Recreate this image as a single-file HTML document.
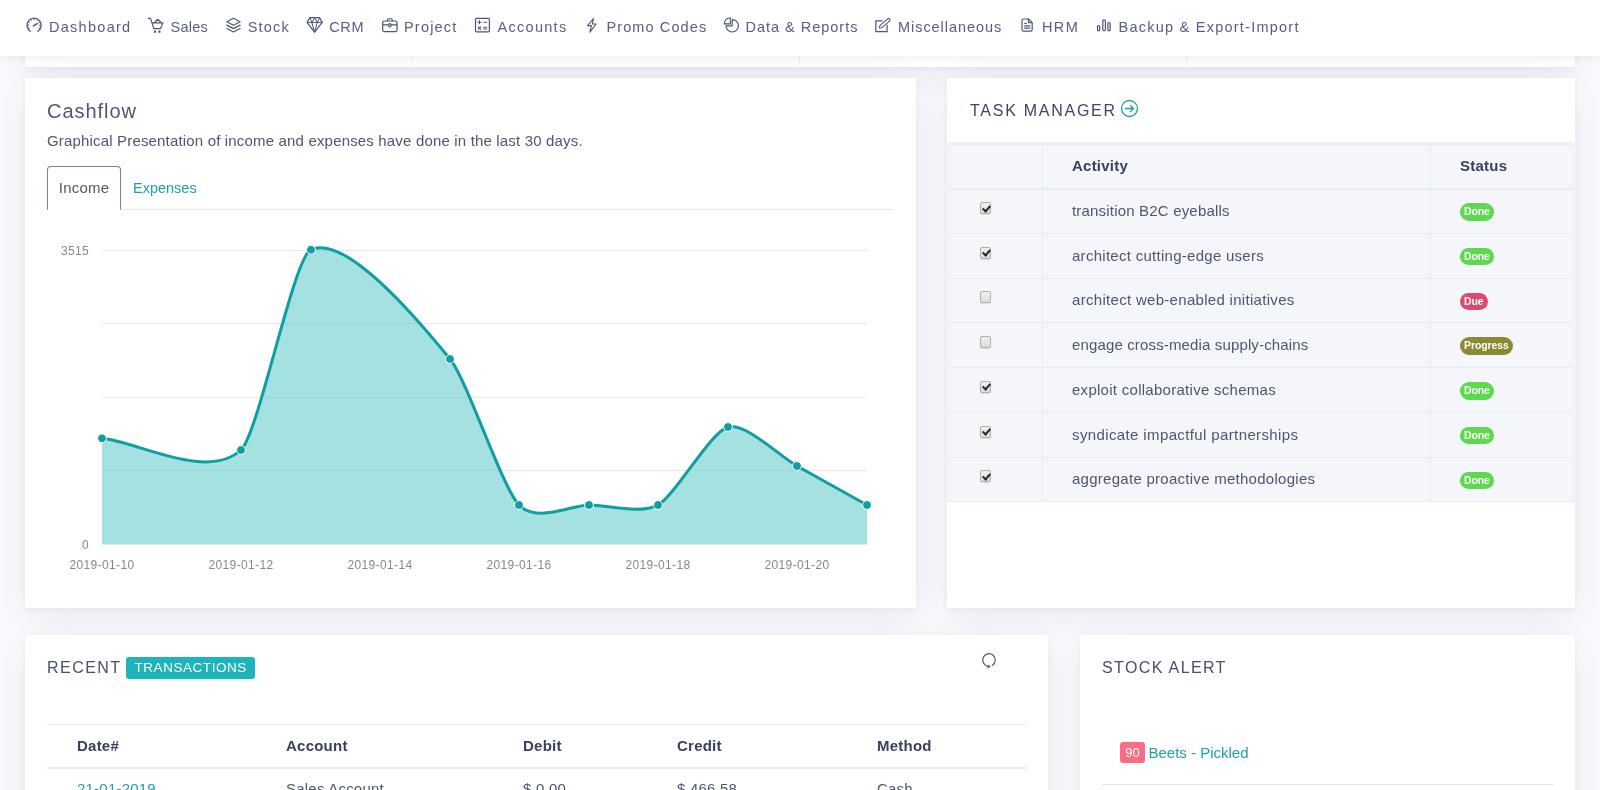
<!DOCTYPE html>
<html lang="en">
<head>
<meta charset="utf-8">
<title>Dashboard</title>
<style>
*{box-sizing:border-box;margin:0;padding:0}
html,body{width:1600px;height:790px;overflow:hidden}
body{background:#f9fafd;font-family:"Liberation Sans",sans-serif;font-size:15px;color:#4e5670;position:relative}
a{text-decoration:none;color:#1e9fa6}
.wrap{position:absolute;left:0;top:0;width:1600px;height:790px;overflow:hidden;will-change:transform}
.nav{position:absolute;left:0;top:0;width:1600px;height:56px;background:#fff;box-shadow:0 1px 10px 0 rgba(50,50,70,.08);z-index:5}
.nicons{position:absolute;left:0;top:0;fill:none;stroke:#4b5675;stroke-linecap:round;stroke-linejoin:round}
.nl{position:absolute;top:17px;font-size:14.5px;line-height:20px;color:#566080;white-space:nowrap}
.card{position:absolute;background:#fff;box-shadow:0 10px 40px 0 rgba(62,57,107,.07),0 2px 9px 0 rgba(62,57,107,.06)}
.mont{font-family:"Liberation Sans",sans-serif}
.prev{left:25px;top:0;width:1550px;height:67px}
.prev i{position:absolute;top:0;width:1px;height:67px;background:#f1f1f4}
/* cashflow */
.cash{left:25px;top:78px;width:891px;height:530px}
.cash h4{position:absolute;left:22px;top:21px;font-size:20px;font-weight:400;letter-spacing:.95px;line-height:24px;color:#4d5775}
.cash p{position:absolute;left:22px;top:52px;font-size:15px;letter-spacing:.17px;line-height:22px;color:#4e5670;white-space:nowrap}
.tabs{position:absolute;left:22px;top:88px;width:846px;height:44px;border-bottom:1px solid #e4e6ea}
.tab1{position:absolute;left:0;top:0;width:74px;height:44px;border:1px solid #7a8299;border-bottom:1px solid #fff;border-radius:4px 4px 0 0;background:#fff;text-align:center;line-height:42px;color:#55595c;letter-spacing:.2px}
.tab2{position:absolute;left:86px;top:0;line-height:44px;color:#1e9fa6;letter-spacing:0;font-size:14.5px}
.chart{position:absolute;left:0;top:0;width:891px;height:529px}
.chart text{font-family:"Liberation Sans",sans-serif;font-size:12px;fill:#888;letter-spacing:.35px}
/* tasks */
.task{left:947px;top:78px;width:628px;height:530px}
.ttl{position:absolute;font-size:16px;letter-spacing:1.6px;line-height:20px;color:#464f6b;white-space:nowrap;text-transform:uppercase}
table{border-collapse:collapse}
.tt{position:absolute;left:1px;top:66px;width:626px;background:#f4f6fa}
.tt td,.tt th{border:1px solid #e3ebf3;height:44.75px;padding:0;vertical-align:middle;text-align:left;white-space:nowrap}
.tt th{height:44px;padding-bottom:2px;font-weight:700;color:#384160;letter-spacing:.23px;border-bottom-width:2px}
.tt td{letter-spacing:.24px;color:#4e5670}.tt td.c2{padding-bottom:1px}.tstrip{position:absolute;left:1px;top:63.500px;width:626px;height:3px;background:#edf1f7}
.tt .c1{width:94px;text-align:center}
.tt .c2{width:388px;padding-left:29px}
.tt .c3{padding-left:29px}
.bdg{display:inline-block;font-size:10.5px;font-weight:700;color:#fff;border-radius:10px;height:17.5px;line-height:17.5px;padding:0 4px;letter-spacing:-.1px;position:relative;top:0}
.g{background:#5ed84f}.r{background:#e0486e}.o{background:#8a8a35}
.cb{display:inline-block;width:11px;height:12px;border:1px solid #b0b0b0;border-radius:2px;position:relative;top:-2.5px;left:-10.500px;background:linear-gradient(#efefef,#dcdcdc);box-shadow:0 1px 1px rgba(0,0,0,.1)}
.cb.on:after{content:"";position:absolute;left:3px;top:.5px;width:3px;height:6px;border:solid #2b2b2b;border-width:0 2px 2px 0;transform:rotate(42deg)}
/* recent */
.rec{left:25px;top:634.5px;width:1023px;height:200px}
.tbadge{position:absolute;left:101px;top:22.500px;height:22px;padding:0 8.500px;background:#1eb4bb;border-radius:3px;color:#fff;font-size:13.5px;letter-spacing:.55px;line-height:22px}
.rt{position:absolute;left:22px;top:89px;width:979px}
.rt th{height:44px;border-top:1px solid #e3ebf3;border-bottom:2px solid #e3ebf3;text-align:left;font-weight:700;color:#384160;letter-spacing:.23px;padding-bottom:1px}
.rt td{height:40px;text-align:left;color:#4e5670;letter-spacing:.22px}
/* stock */
.stk{left:1080px;top:634.5px;width:495px;height:200px}
.sb{position:absolute;left:40px;top:107px;height:21px;width:25px;background:#ff6b81;border-radius:3px;color:#fff;font-size:13px;text-align:center;line-height:21px}
.sn{position:absolute;left:68.500px;top:107px;line-height:22px;font-size:15px;letter-spacing:0;color:#1e9fa6;white-space:nowrap}
.sl{position:absolute;left:22px;top:149px;width:451px;height:1px;background:#e4e6ea}
</style>
</head>
<body>
<div class="wrap">
<div class="nav" id="nav">
<svg class="nicons" width="1600" height="56" viewBox="0 0 1600 56">
<g stroke-width="1.2">
<path d="M30.36 31.33A7.1 7.1 0 1 1 37.84 31.33"/>
<path d="M33.4 25.9L37.3 23.7" stroke-width="1.5"/>
<path stroke-width="1" d="M34.1 18.6v1.3M27.4 25.3h1.3M40.8 25.3h-1.3M28.3 21.9l1.1.65M39.9 21.9l-1.1.65M30.7 19.5l.65 1.1M37.500 19.5l-.65 1.1M28.200 28.500l1.100-.6M40 28.500l-1.100-.6"/>
<path d="M148.3 18.4h2.2l3.300 10.150h6.800l2.300-5.700h-10.600"/>
<path d="M154.800 22.500l2.700-3.200 3.100 2.500" stroke-width="1.200"/>
<circle cx="155" cy="31.650" r=".6"/><circle cx="159.450" cy="31.650" r=".6"/>
<path d="M233.450 18.300l6.600 3.500-6.600 3.500-6.600-3.500z"/><path d="M226.850 25.100l6.600 3.500 6.600-3.500"/><path d="M226.850 28.500l6.600 3.500 6.600-3.500"/>
<path d="M309.900 17.700h9.600l2.700 4.700-7.600 9.800-7.600-9.800z"/>
<path stroke-width="1" d="M307.400 22.400h15M309.900 17.700l1.900 4.700 2.800-4.700 2.700 4.700 2.400-4.700M311.800 22.400l2.800 9.800 2.700-9.800"/>
<rect x="382.700" y="21" width="14.300" height="10.600" rx="1.500"/>
<path d="M387.600 21v-1.400q0-.8.800-.8h3q.8 0 .8.800v1.400" stroke-width="1.1"/>
<path d="M382.700 24.900h5.700M391.200 24.900h5.800" stroke-width="1.100"/>
<ellipse cx="389.800" cy="25.300" rx="1.200" ry="1.700" stroke-width="1.200"/>
<rect x="475.500" y="18.400" width="13.900" height="13.400" rx="1"/>
<path stroke-width="1.1" d="M477.900 22.200h3.200M479.500 20.600v3.200M483.700 22.200h3M478.300 26.900l2.400 2.400M480.700 26.900l-2.400 2.400M483.700 27.300h3M483.700 29h3"/>
<path stroke-width="1.1" d="M593.500 18.500L587.500 25.600h3.900L589.900 32.200l6.200-8.200h-3.900z"/>
<path d="M732.200 19.600A6.200 6.200 0 1 1 726 25.800H732.200z"/>
<path d="M730.300 23.900H724.200A6.100 6.100 0 0 1 730.300 17.800z" stroke-width="1.1"/>
<path d="M887.100 25.200v6.400h-11.300v-10.800h6.300"/>
<path stroke-width="1.1" d="M879.400 28l.5-2.300 8-7q.8-.6 1.500.1l.4.500q.6.800-.1 1.500l-8 7z"/>
<path d="M1023.700 19h4.800l3.700 3.700v6.800q0 1.700-1.700 1.700h-6.800q-1.700 0-1.700-1.700v-8.800q0-1.700 1.700-1.700z"/>
<path stroke-width="1.200" d="M1028.400 19.300v3.300h3.500M1024.600 23.500h1.800M1024.600 25.900h5.200M1024.600 28.200h5.200"/>
<rect x="1097.500" y="25.500" width="2.200" height="5.300" rx="1"/><rect x="1102.800" y="19.900" width="2.600" height="10.900" rx="1.200"/><rect x="1107.900" y="22.600" width="2.200" height="8.200" rx="1"/>
</g>
</svg>
<span class="nl" style="left:49.00px;letter-spacing:1.275px">Dashboard</span>
<span class="nl" style="left:170.50px;letter-spacing:0.250px">Sales</span>
<span class="nl" style="left:247.75px;letter-spacing:1.200px">Stock</span>
<span class="nl" style="left:329.25px;letter-spacing:0.600px">CRM</span>
<span class="nl" style="left:404.00px;letter-spacing:1.200px">Project</span>
<span class="nl" style="left:497.50px;letter-spacing:1.286px">Accounts</span>
<span class="nl" style="left:606.50px;letter-spacing:1.100px">Promo Codes</span>
<span class="nl" style="left:745.50px;letter-spacing:0.985px">Data &amp; Reports</span>
<span class="nl" style="left:898.00px;letter-spacing:0.950px">Miscellaneous</span>
<span class="nl" style="left:1042.00px;letter-spacing:1.400px">HRM</span>
<span class="nl" style="left:1118.50px;letter-spacing:1.238px">Backup &amp; Export-Import</span>
</div>
<div class="card prev"><i style="left:387px"></i><i style="left:774px"></i><i style="left:1161px"></i></div>

<div class="card cash">
  <h4>Cashflow</h4>
  <p>Graphical Presentation of income and expenses have done in the last 30 days.</p>
  <div class="tabs"><div class="tab1">Income</div><a class="tab2">Expenses</a></div>
  <svg class="chart" viewBox="25 78 891 529">
    <g stroke="#e8e8e8" stroke-width="1">
      <path d="M102 250.500H867M102 323.5H867M102 397.200H867M102 470.5H867M102 544.500H867"/>
    </g>
    <text x="89" y="254.500" text-anchor="end">3515</text>
    <text x="89" y="548.5" text-anchor="end">0</text>
    <g text-anchor="middle">
      <text x="102" y="568.5">2019-01-10</text><text x="241" y="568.5">2019-01-12</text><text x="380" y="568.5">2019-01-14</text>
      <text x="519" y="568.5">2019-01-16</text><text x="658" y="568.5">2019-01-18</text><text x="797" y="568.5">2019-01-20</text>
    </g>
    <path fill="#4cc3c3" fill-opacity=".5" stroke="none" d="M102.00,438.30C136.75,441.23,206.25,481.39,241.00,450.00C258.50,434.19,293.50,257.12,311.00,249.50C345.75,234.37,415.25,316.31,450.00,359.00C467.25,380.19,501.75,486.88,519.00,505.00C536.50,523.38,571.50,505.00,589.00,505.00C606.25,505.00,640.75,514.68,658.00,505.00C675.50,495.18,710.50,431.91,728.00,427.00C745.25,422.16,779.75,456.32,797.00,466.00C814.50,475.82,849.50,495.25,867.00,505.00L867,544L102,544Z"/>
    <path fill="none" stroke="#0e9ea3" stroke-width="3" d="M102.00,438.30C136.75,441.23,206.25,481.39,241.00,450.00C258.50,434.19,293.50,257.12,311.00,249.50C345.75,234.37,415.25,316.31,450.00,359.00C467.25,380.19,501.75,486.88,519.00,505.00C536.50,523.38,571.50,505.00,589.00,505.00C606.25,505.00,640.75,514.68,658.00,505.00C675.50,495.18,710.50,431.91,728.00,427.00C745.25,422.16,779.75,456.32,797.00,466.00C814.50,475.82,849.50,495.25,867.00,505.00"/>
    <g fill="#0e9ea3" stroke="#fff" stroke-width="1"><circle cx="102" cy="438.3" r="4.400"/><circle cx="241" cy="450" r="4.400"/><circle cx="311" cy="249.8" r="4.400"/><circle cx="450" cy="359" r="4.400"/><circle cx="519" cy="505" r="4.400"/><circle cx="589" cy="505" r="4.400"/><circle cx="658" cy="505" r="4.400"/><circle cx="728" cy="427" r="4.400"/><circle cx="797" cy="466" r="4.400"/><circle cx="867" cy="505" r="4.400"/></g>
  </svg>
</div>

<div class="card task">
  <div class="ttl" style="left:23px;top:23px;color:#3d4663;letter-spacing:1.74px">Task Manager</div>
  <svg style="position:absolute;left:173px;top:21px" width="19" height="19" viewBox="0 0 19 19" fill="none" stroke="#1e9fa6" stroke-width="1.3" stroke-linecap="round" stroke-linejoin="round"><circle cx="9.5" cy="9.5" r="8"/><path d="M5.5 9.5h8M10.5 6.5l3 3-3 3"/></svg>
  <div class="tstrip"></div>
  <table class="tt">
    <tr><th class="c1"></th><th class="c2">Activity</th><th class="c3">Status</th></tr>
    <tr><td class="c1"><span class="cb on"></span></td><td class="c2" style="letter-spacing:0.185px">transition B2C eyeballs</td><td class="c3"><span class="bdg g">Done</span></td></tr>
    <tr><td class="c1"><span class="cb on"></span></td><td class="c2" style="letter-spacing:0.277px">architect cutting-edge users</td><td class="c3"><span class="bdg g">Done</span></td></tr>
    <tr><td class="c1"><span class="cb"></span></td><td class="c2" style="letter-spacing:0.302px">architect web-enabled initiatives</td><td class="c3"><span class="bdg r">Due</span></td></tr>
    <tr><td class="c1"><span class="cb"></span></td><td class="c2" style="letter-spacing:0.143px">engage cross-media supply-chains</td><td class="c3"><span class="bdg o">Progress</span></td></tr>
    <tr><td class="c1"><span class="cb on"></span></td><td class="c2" style="letter-spacing:0.276px">exploit collaborative schemas</td><td class="c3"><span class="bdg g">Done</span></td></tr>
    <tr><td class="c1"><span class="cb on"></span></td><td class="c2" style="letter-spacing:0.379px">syndicate impactful partnerships</td><td class="c3"><span class="bdg g">Done</span></td></tr>
    <tr><td class="c1"><span class="cb on"></span></td><td class="c2" style="letter-spacing:0.271px">aggregate proactive methodologies</td><td class="c3"><span class="bdg g">Done</span></td></tr>
  </table>
</div>

<div class="card rec">
  <div class="ttl" style="left:22px;top:23px;letter-spacing:1.45px">Recent</div>
  <div class="tbadge">TRANSACTIONS</div>
  <svg style="position:absolute;left:955.1px;top:16.7px" width="19" height="19" viewBox="0 0 19 19" fill="none" stroke="#4a5572" stroke-width="1.2" stroke-linecap="round" stroke-linejoin="round"><path d="M12.34 14.34A6.3 6.3 0 1 0 8.4 15.27"/><path d="M10 15.6L8.3 13.9 7.700 17z" fill="#4a5572" stroke-width=".6"/></svg>
  <table class="rt">
    <tr><th style="width:239px;padding-left:30px">Date#</th><th style="width:237px">Account</th><th style="width:154px">Debit</th><th style="width:200px">Credit</th><th>Method</th></tr>
    <tr><td style="padding-left:30px"><a>21-01-2019</a></td><td>Sales Account</td><td>$ 0.00</td><td>$ 466.58</td><td>Cash</td></tr>
  </table>
</div>

<div class="card stk">
  <div class="ttl" style="left:22px;top:23px;letter-spacing:1.37px">Stock Alert</div>
  <div class="sb">90</div><a class="sn">Beets - Pickled</a>
  <div class="sl"></div>
</div>

</div>
</body>
</html>
